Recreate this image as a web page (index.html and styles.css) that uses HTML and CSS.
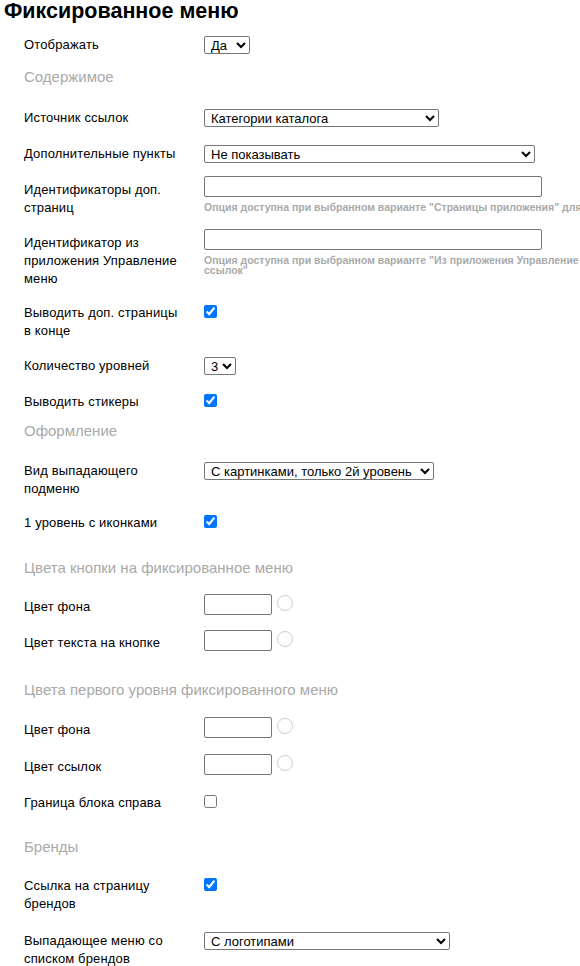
FILE: index.html
```html
<!DOCTYPE html>
<html lang="ru">
<head>
<meta charset="utf-8">
<title>Фиксированное меню</title>
<link rel="stylesheet" href="styles.css">
</head>
<body>
<h1 class="title">Фиксированное меню</h1>
<div class="form">
  <div class="row r1">
    <div class="label">Отображать</div>
    <div class="ctrl"><select class="sel w-da"><option>Да</option></select></div>
  </div>
  <div class="section s1">Содержимое</div>
  <div class="row r2">
    <div class="label">Источник ссылок</div>
    <div class="ctrl"><select class="sel w-src"><option>Категории каталога</option></select></div>
  </div>
  <div class="row r3">
    <div class="label">Дополнительные пункты</div>
    <div class="ctrl"><select class="sel w-add"><option>Не показывать</option></select></div>
  </div>
  <div class="row r4">
    <div class="label">Идентификаторы доп. страниц</div>
    <div class="ctrl ctrl-input">
      <input class="text" type="text">
      <div class="hint">Опция доступна при выбранном варианте "Страницы приложения" для источника</div>
    </div>
  </div>
  <div class="row r5">
    <div class="label">Идентификатор из приложения Управление меню</div>
    <div class="ctrl ctrl-input">
      <input class="text" type="text">
      <div class="hint">Опция доступна при выбранном варианте "Из приложения Управление меню" в поле "Источник<br>ссылок"</div>
    </div>
  </div>
  <div class="row r6">
    <div class="label">Выводить доп. страницы в конце</div>
    <div class="ctrl ctrl-check"><input class="check" type="checkbox" checked></div>
  </div>
  <div class="row r7">
    <div class="label">Количество уровней</div>
    <div class="ctrl"><select class="sel w-lvl"><option>3</option></select></div>
  </div>
  <div class="row r8">
    <div class="label">Выводить стикеры</div>
    <div class="ctrl ctrl-check"><input class="check" type="checkbox" checked></div>
  </div>
  <div class="section s2">Оформление</div>
  <div class="row r9">
    <div class="label">Вид выпадающего подменю</div>
    <div class="ctrl"><select class="sel w-sub"><option>С картинками, только 2й уровень</option></select></div>
  </div>
  <div class="row r10">
    <div class="label">1 уровень с иконками</div>
    <div class="ctrl ctrl-check"><input class="check" type="checkbox" checked></div>
  </div>
  <div class="section s3">Цвета кнопки на фиксированное меню</div>
  <div class="row r11">
    <div class="label">Цвет фона</div>
    <div class="ctrl ctrl-color"><input class="color" type="text"><span class="swatch"></span></div>
  </div>
  <div class="row r12">
    <div class="label">Цвет текста на кнопке</div>
    <div class="ctrl ctrl-color"><input class="color" type="text"><span class="swatch"></span></div>
  </div>
  <div class="section s4">Цвета первого уровня фиксированного меню</div>
  <div class="row r13">
    <div class="label">Цвет фона</div>
    <div class="ctrl ctrl-color"><input class="color" type="text"><span class="swatch"></span></div>
  </div>
  <div class="row r14">
    <div class="label">Цвет ссылок</div>
    <div class="ctrl ctrl-color"><input class="color" type="text"><span class="swatch"></span></div>
  </div>
  <div class="row r15">
    <div class="label">Граница блока справа</div>
    <div class="ctrl ctrl-check"><input class="check" type="checkbox"></div>
  </div>
  <div class="section s5">Бренды</div>
  <div class="row r16">
    <div class="label">Ссылка на страницу брендов</div>
    <div class="ctrl ctrl-check"><input class="check" type="checkbox" checked></div>
  </div>
  <div class="row r17">
    <div class="label">Выпадающее меню со списком брендов</div>
    <div class="ctrl"><select class="sel w-brand"><option>С логотипами</option></select></div>
  </div>
</div>
</body>
</html>
```

FILE: styles.css
```css
html {
  overflow: hidden;
  background: #fff;
}
body {
  margin: 0;
  font-family: "Liberation Sans", Arial, sans-serif;
  font-size: 13px;
  color: #000;
}
.title {
  margin: 0;
  padding-left: 4px;
  font-size: 21.5px;
  font-weight: bold;
  line-height: 22px;
  height: 22px;
}
.form {
  padding-left: 24px;
}
.row {
  display: flex;
  align-items: flex-start;
  margin-top: 18px;
}
.label {
  width: 160px;
  padding-right: 20px;
  flex: none;
  line-height: 18px;
  letter-spacing: 0.15px;
}
.ctrl {
  flex: none;
  position: relative;
}
.section {
  font-size: 15px;
  line-height: 20px;
  color: #a9a9a9;
}
.sel {
  display: block;
  margin: 0;
  height: 18px;
  font-family: "Liberation Sans", Arial, sans-serif;
  font-size: 13px;
  color: #000;
  background: #fff;
  border: 1px solid #767676;
  border-radius: 2px;
  padding: 0 0 0 2px;
}
.w-da { width: 46px; }
.w-src { width: 235px; }
.w-add { width: 331px; }
.w-lvl { width: 32px; }
.w-sub { width: 230px; }
.w-brand { width: 246px; }
.ctrl-input {
  margin-top: -5px;
}
.text {
  display: block;
  box-sizing: border-box;
  margin: 0;
  width: 338px;
  height: 21px;
  border: 1px solid #767676;
  border-radius: 2px;
  padding: 1px 2px;
  font: 13px "Liberation Sans", Arial, sans-serif;
}
.hint {
  margin-top: 5px;
  font-size: 10.5px;
  font-weight: bold;
  line-height: 10px;
  color: #aaaaaa;
  white-space: nowrap;
}
.ctrl-check {
  padding-top: 1px;
}
.check {
  display: block;
  margin: 0;
  width: 13px;
  height: 13px;
}
.ctrl-color {
  margin-top: -4px;
  display: flex;
  align-items: flex-start;
}
.color {
  display: block;
  box-sizing: border-box;
  margin: 0;
  width: 68px;
  height: 21px;
  border: 1px solid #767676;
  border-radius: 2px;
  padding: 1px 2px;
  font: 13px "Liberation Sans", Arial, sans-serif;
}
.swatch {
  display: block;
  box-sizing: border-box;
  width: 16px;
  height: 16px;
  margin: 1px 0 0 5px;
  border: 1px solid #cfcfcf;
  border-radius: 50%;
}

.r1 { margin-top: 14px; }
.s1 { margin-top: 13px; }
.r2 { margin-top: 22px; }
.r5 { margin-top: 17px; }
.r6 { margin-top: 16px; }
.r7 { margin-top: 17px; }
.s2 { margin-top: 10px; }
.r9 { margin-top: 21px; }
.r10 { margin-top: 16px; }
.s3 { margin-top: 26px; }
.r11 { margin-top: 20px; }
.s4 { margin-top: 28px; }
.r13 { margin-top: 21px; }
.r14 { margin-top: 19px; }
.s5 { margin-top: 25px; }
.r16 { margin-top: 20px; }
.r17 { margin-top: 19px; }
```
